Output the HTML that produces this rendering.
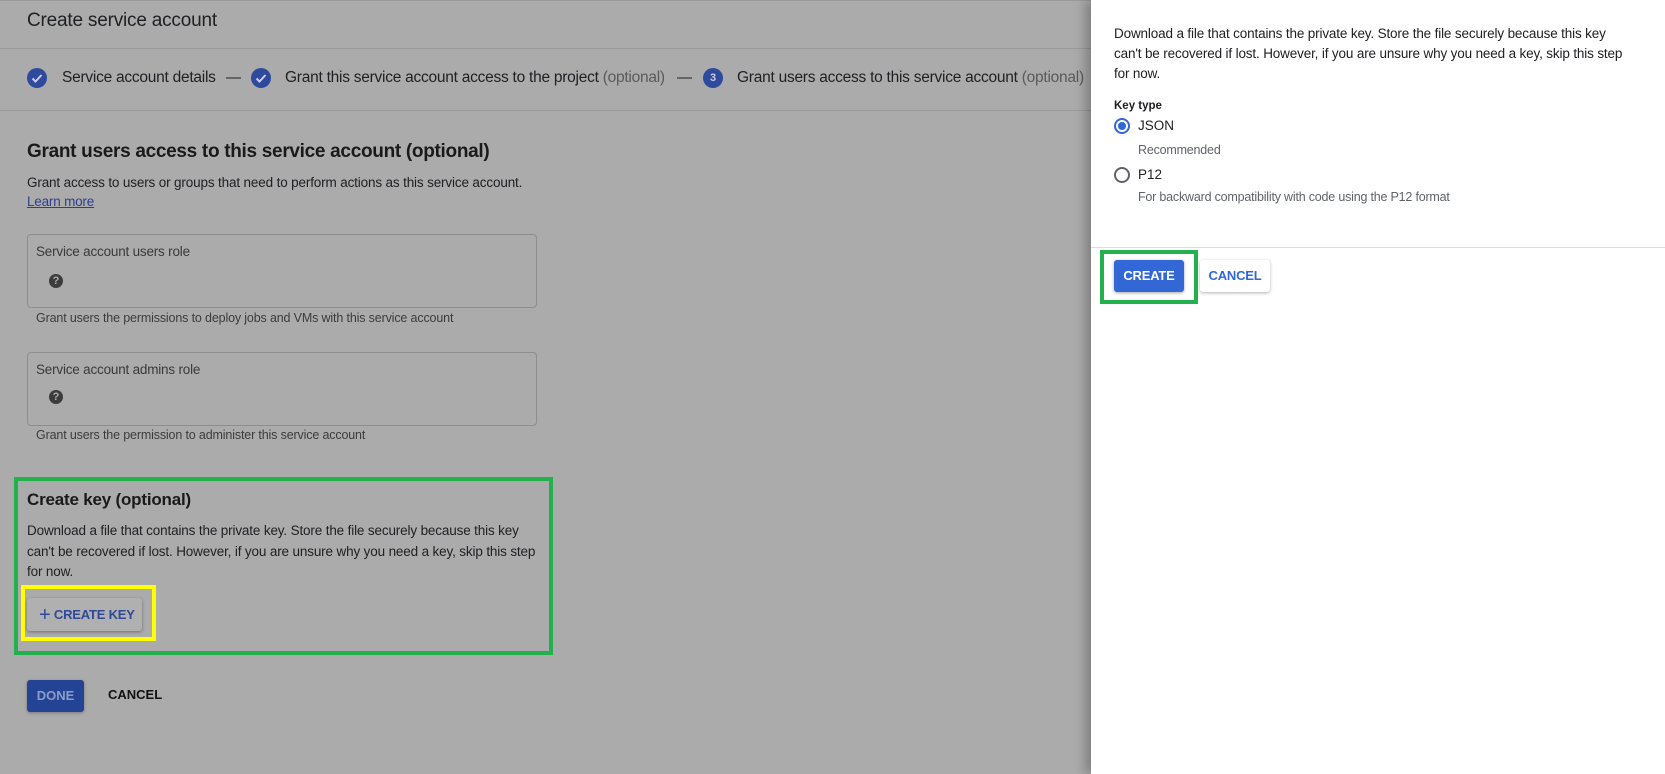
<!DOCTYPE html>
<html><head><meta charset="utf-8"><style>
*{box-sizing:border-box;margin:0;padding:0}
body{width:1665px;height:774px;overflow:hidden;position:relative;background:#ababab;font-family:"Liberation Sans",Arial,sans-serif;color:#202124}
.a{position:absolute;white-space:nowrap}
.chk{position:absolute;width:20px;height:20px;border-radius:50%;background:#2d4a9c}
.q{position:absolute;width:14px;height:14px;border-radius:50%;background:#3c3c3c;color:#ababab;font-size:11px;font-weight:bold;text-align:center;line-height:14px}
.fld{position:absolute;left:27px;width:510px;border:1px solid #8e8e8e;border-radius:4px}
.help{font-size:12.5px;color:#3c3c3c;letter-spacing:-.15px}
#panel{position:absolute;left:1091px;top:0;width:574px;height:774px;background:#fff;box-shadow:-6px 0 10px rgba(0,0,0,.25)}
.radio{position:absolute;width:16px;height:16px;border-radius:50%;border:2px solid #5f6368}
.st{font-size:15.5px;letter-spacing:-.25px}
</style></head><body>
<div class="a" style="left:0;top:0;width:1091px;height:1px;background:#999"></div>
<div class="a" style="left:27px;top:10px;font-size:19px;color:#202124;letter-spacing:-.2px">Create service account</div>
<div class="a" style="left:0;top:48px;width:1091px;height:1px;background:#9a9a9a"></div>

<div class="chk" style="left:27px;top:68px"></div>
<svg class="a" style="left:27px;top:68px" width="20" height="20"><path d="M5.5 10.5l3 3 6-6.5" stroke="#ccd" stroke-width="2" fill="none"/></svg>
<div class="a st" style="left:62px;top:69px">Service account details</div>
<div class="a" style="left:226px;top:69px;font-size:15px">—</div>
<div class="chk" style="left:251px;top:68px"></div>
<svg class="a" style="left:251px;top:68px" width="20" height="20"><path d="M5.5 10.5l3 3 6-6.5" stroke="#ccd" stroke-width="2" fill="none"/></svg>
<div class="a st" style="left:285px;top:69px">Grant this service account access to the project <span style="color:#5a5a5a">(optional)</span></div>
<div class="a" style="left:677px;top:69px;font-size:15px">—</div>
<div class="chk" style="left:703px;top:68px;color:#ccd;font-size:11px;font-weight:bold;text-align:center;line-height:20px">3</div>
<div class="a st" style="left:737px;top:69px">Grant users access to this service account <span style="color:#5a5a5a">(optional)</span></div>
<div class="a" style="left:0;top:110px;width:1091px;height:1px;background:#9a9a9a"></div>

<div class="a" style="left:27px;top:141px;font-size:19px;font-weight:bold;color:#1a1a1a;letter-spacing:-.3px">Grant users access to this service account (optional)</div>
<div class="a" style="left:27px;top:175px;font-size:13.5px;letter-spacing:-.15px">Grant access to users or groups that need to perform actions as this service account.</div>
<div class="a" style="left:27px;top:194px;font-size:13.5px;color:#2f3f8f;text-decoration:underline;letter-spacing:-.2px">Learn more</div>

<div class="fld" style="top:234px;height:74px"></div>
<div class="a" style="left:36px;top:244px;font-size:13.5px;color:#3a3a3a;letter-spacing:-.2px">Service account users role</div>
<div class="q" style="left:49px;top:274px">?</div>
<div class="a help" style="left:36px;top:311px">Grant users the permissions to deploy jobs and VMs with this service account</div>

<div class="fld" style="top:352px;height:74px"></div>
<div class="a" style="left:36px;top:362px;font-size:13.5px;color:#3a3a3a;letter-spacing:-.2px">Service account admins role</div>
<div class="q" style="left:49px;top:390px">?</div>
<div class="a help" style="left:36px;top:428px">Grant users the permission to administer this service account</div>

<div class="a" style="left:14px;top:477px;width:539px;height:178px;border:4px solid #22b14c"></div>
<div class="a" style="left:27px;top:490px;font-size:17px;font-weight:bold;color:#1a1a1a;letter-spacing:-.2px">Create key (optional)</div>
<div class="a" style="left:27px;top:521px;font-size:13.5px;line-height:20.5px;letter-spacing:-.15px">Download a file that contains the private key. Store the file securely because this key<br>can't be recovered if lost. However, if you are unsure why you need a key, skip this step<br>for now.</div>
<div class="a" style="left:21px;top:585px;width:135px;height:56px;border:4px solid #ffff00"></div>
<div class="a" style="left:27px;top:598px;width:115px;height:33px;background:#b0b0b0;border-radius:3px;box-shadow:0 1px 3px rgba(0,0,0,.35);font-size:13px;font-weight:bold;color:#2f4a98;line-height:33px;padding-left:12px;letter-spacing:-.2px"><span style="font-size:20px;font-weight:normal;vertical-align:-2px">+</span> CREATE KEY</div>

<div class="a" style="left:27px;top:680px;width:57px;height:32px;background:#244394;border-radius:3px;box-shadow:0 1px 3px rgba(0,0,0,.3);color:#8c9dc9;font-size:13px;font-weight:bold;text-align:center;line-height:32px">DONE</div>
<div class="a" style="left:108px;top:687px;font-size:13px;font-weight:bold;color:#111">CANCEL</div>

<div id="panel">
<div class="a" style="left:23px;top:24px;font-size:13.5px;line-height:20px;letter-spacing:-.15px">Download a file that contains the private key. Store the file securely because this key<br>can't be recovered if lost. However, if you are unsure why you need a key, skip this step<br>for now.</div>
<div class="a" style="left:23px;top:100px;font-size:11.5px;font-weight:bold">Key type</div>
<div class="radio" style="left:23px;top:118px;border-color:#3367d6"></div>
<div class="a" style="left:27px;top:122px;width:8px;height:8px;border-radius:50%;background:#3367d6"></div>
<div class="a" style="left:47px;top:118px;font-size:13.5px">JSON</div>
<div class="a" style="left:47px;top:143px;font-size:12.5px;color:#5f6368;letter-spacing:-.2px">Recommended</div>
<div class="radio" style="left:23px;top:167px"></div>
<div class="a" style="left:47px;top:167px;font-size:13.5px">P12</div>
<div class="a" style="left:47px;top:190px;font-size:12.5px;color:#5f6368;letter-spacing:-.2px">For backward compatibility with code using the P12 format</div>
<div class="a" style="left:0;top:247px;width:574px;height:1px;background:#dadce0"></div>
<div class="a" style="left:9px;top:250px;width:98px;height:54px;border:4px solid #22b14c"></div>
<div class="a" style="left:23px;top:260px;width:70px;height:32px;background:#3367d6;border-radius:3px;box-shadow:0 1px 3px rgba(0,0,0,.35);color:#fff;font-size:13px;font-weight:bold;text-align:center;line-height:32px;letter-spacing:-.2px">CREATE</div>
<div class="a" style="left:109px;top:260px;width:70px;height:32px;background:#fff;border-radius:3px;box-shadow:0 1px 3px rgba(0,0,0,.3);color:#3367d6;font-size:13px;font-weight:bold;text-align:center;line-height:32px;letter-spacing:-.2px">CANCEL</div>
</div>
</body></html>
